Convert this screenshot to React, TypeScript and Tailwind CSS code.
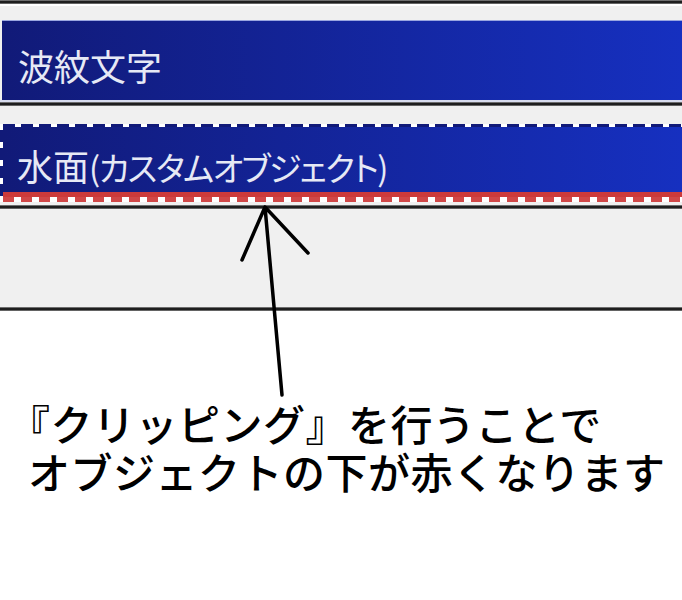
export default function App() {
  return (
    <div className="relative w-[682px] h-[600px] overflow-hidden bg-white">
      <Divider />
      <div className="bg-[#f0f0f0] border-t-2 border-white pt-[14px]">
        <ListItem>波紋文字</ListItem>
        <div className="h-[2px] bg-[#d8dcef]" />
      </div>
      <Divider />
      <div className="bg-[#f0f0f0] pt-[18px] pb-[3px]">
        <SelectedItem>
          水面<span className="text-[33px] tracking-[-1.5px]">(カスタムオブジェクト)</span>
        </SelectedItem>
      </div>
      <Divider />
      <div className="h-[98px] bg-[#f0f0f0]" />
      <Divider />

      <div
        className="pt-[92px] pl-[8px] text-[42px] leading-[48px] font-medium text-black tracking-[0.5px]"
        style={{ fontFamily: '"Liberation Serif", "Noto Sans CJK JP", serif' }}
      >
        <p>『クリッピング』を行うことで</p>
        <p className="pl-[20px]">オブジェクトの下が赤くなります</p>
      </div>

      <svg className="absolute left-0 top-0" width="682" height="600" viewBox="0 0 682 600" fill="none">
        <path d="M282 395 L265 207 M242 260 L265 207 L308 253" stroke="#000" strokeWidth={3.5} strokeLinecap="round" strokeLinejoin="round" />
      </svg>
    </div>
  );
}

function Divider() {
  return <div className="h-[4px] bg-[linear-gradient(#9a9a9a,#1e1e1e_35%,#1e1e1e_65%,#8a8a8a)]" />;
}

function ListItem({ children }: { children: React.ReactNode }) {
  return (
    <div className="ml-[2px] h-[80px] border-t border-[#9aa6e0] bg-[linear-gradient(90deg,#111a78,#1630c0)] flex items-center pl-[16px] pt-[8px]">
      <ItemText>{children}</ItemText>
    </div>
  );
}

function SelectedItem({ children }: { children: React.ReactNode }) {
  return (
    <div className="flex">
      <div className="w-[3px] bg-[repeating-linear-gradient(180deg,#ffffff_0_6px,#111a78_6px_18px)]" />
      <div className="flex-1 flex flex-col">
        <div className="h-[3px] bg-[repeating-linear-gradient(90deg,#111a78_0_12px,#ffffff_12px_18px)]" />
        <div className="h-[65px] bg-[linear-gradient(90deg,#111a78,#1630c0)] flex items-center pl-[14px] pt-[12px]">
          <ItemText>{children}</ItemText>
        </div>
        <div className="h-[5px] bg-[#cc3a3a]" />
        <div className="h-[5px] bg-[repeating-linear-gradient(90deg,#d04848_0_11px,#ffffff_11px_18px)]" />
      </div>
    </div>
  );
}

function ItemText({ children }: { children: React.ReactNode }) {
  return (
    <span
      className="text-[36px] leading-none text-[#e6e9f5] [font-feature-settings:'palt'] whitespace-nowrap"
      style={{ fontFamily: '"Noto Sans CJK JP", sans-serif' }}
    >
      {children}
    </span>
  );
}
